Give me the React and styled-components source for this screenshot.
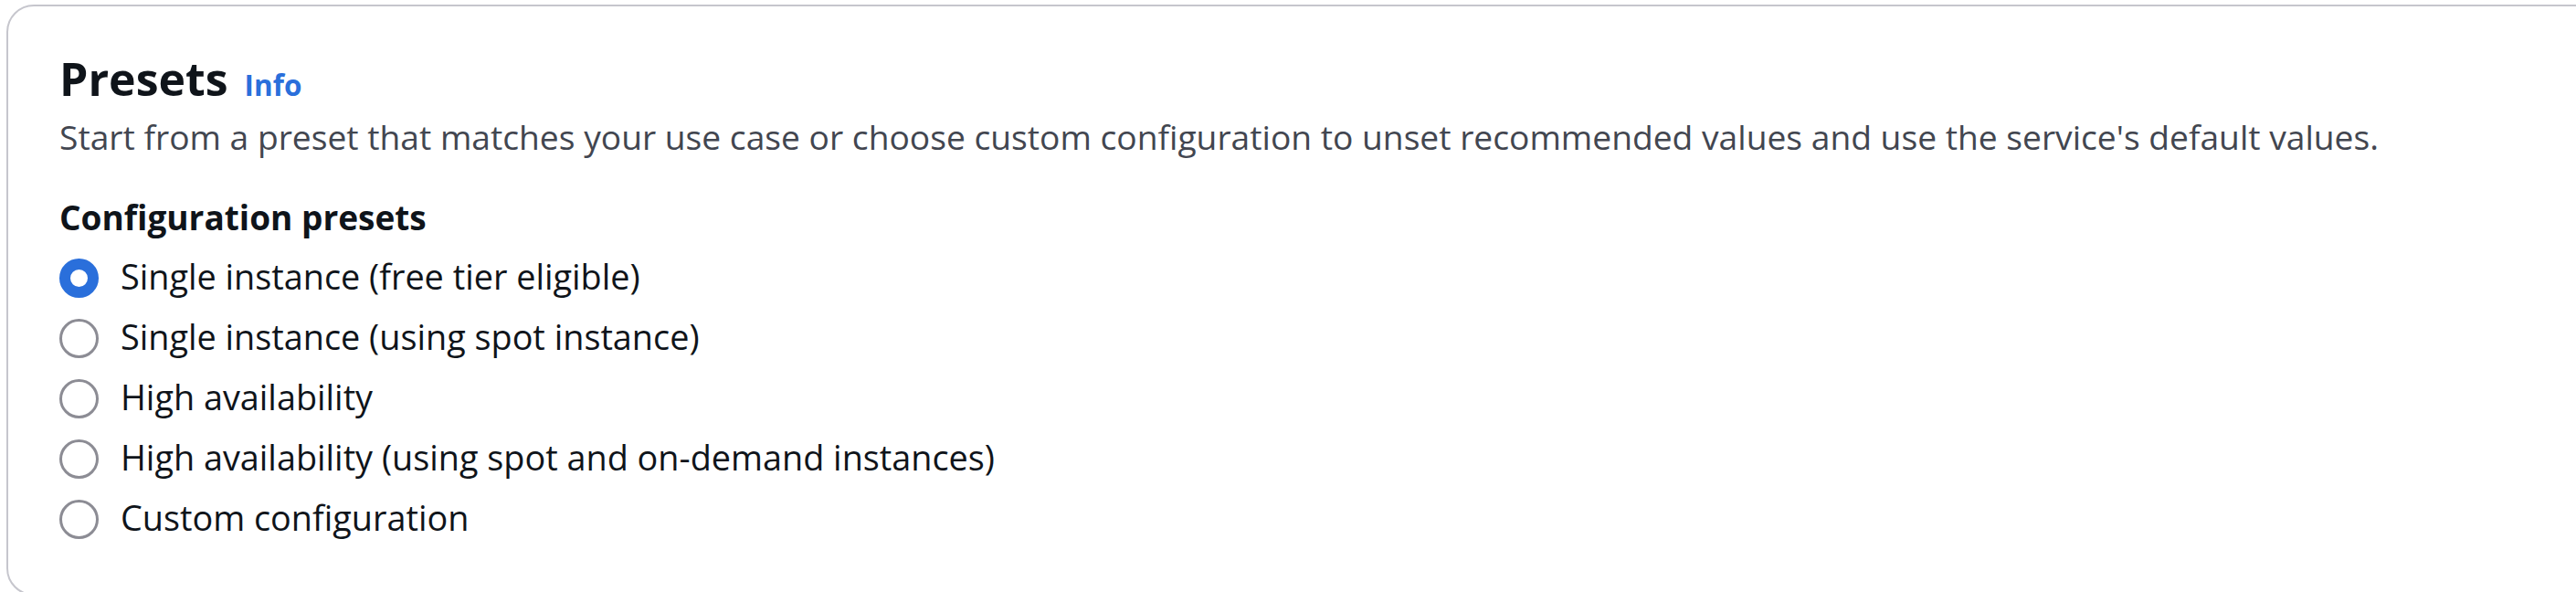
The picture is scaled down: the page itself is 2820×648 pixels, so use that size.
import React, { useState } from 'react';
import styled, { createGlobalStyle } from 'styled-components';

const GlobalStyle = createGlobalStyle`
  html, body {
    margin: 0;
    padding: 0;
    background: #ffffff;
    overflow: hidden;
  }
  body {
    font-family: "Open Sans", "Noto Sans", sans-serif;
  }
`;

const Page = styled.div`
  height: 100vh;
  overflow: hidden;
  padding: 5px 0 0 7px;
  box-sizing: border-box;
`;

const Card = styled.section`
  width: calc(100% + 60px);
  box-sizing: border-box;
  border: 2px solid #c6c6cd;
  border-radius: 30px;
  background: #ffffff;
  padding: 49px 56px 50px 56px;
`;

const Header = styled.div`
  display: flex;
  align-items: baseline;
  gap: 18px;
`;

const Title = styled.h2`
  margin: 0;
  font-size: 50px;
  line-height: 60px;
  font-weight: 700;
  color: #0f141a;
`;

const InfoLink = styled.a`
  font-size: 31.5px;
  font-weight: 700;
  color: #2a6fdb;
  text-decoration: none;
  cursor: pointer;
`;

const Description = styled.p`
  margin: 8px 0 0 0;
  font-size: 37.2px;
  line-height: 52px;
  color: #424650;
`;

const Fieldset = styled.fieldset`
  margin: 37px 0 0 0;
  padding: 0;
  border: none;
`;

const Legend = styled.legend`
  padding: 0;
  font-size: 37px;
  line-height: 50px;
  font-weight: 700;
  color: #0f141a;
`;

const Options = styled.div`
  display: flex;
  flex-direction: column;
  margin-top: 7px;
`;

const Option = styled.label`
  display: flex;
  align-items: center;
  gap: 24px;
  height: 66px;
  cursor: pointer;
`;

const Circle = styled.span`
  flex: none;
  box-sizing: border-box;
  width: 43px;
  height: 43px;
  margin-top: 2px;
  border-radius: 50%;
  border: ${props => (props.checked ? '12px solid #2a6fdb' : '3px solid #8c8c94')};
  background: #ffffff;
`;

const HiddenInput = styled.input`
  position: absolute;
  opacity: 0;
  width: 0;
  height: 0;
`;

const OptionText = styled.span`
  font-size: 37.8px;
  line-height: 66px;
  color: #0f141a;
`;

const presets = [
  'Single instance (free tier eligible)',
  'Single instance (using spot instance)',
  'High availability',
  'High availability (using spot and on-demand instances)',
  'Custom configuration',
];

export default function App() {
  const [selected, setSelected] = useState(0);

  return (
    <Page>
      <GlobalStyle />
      <Card>
        <Header>
          <Title>Presets</Title>
          <InfoLink>Info</InfoLink>
        </Header>
        <Description>
          Start from a preset that matches your use case or choose custom configuration to unset recommended values and use the service's default values.
        </Description>
        <Fieldset>
          <Legend>Configuration presets</Legend>
          <Options>
            {presets.map((label, i) => (
              <Option key={label}>
                <HiddenInput
                  type="radio"
                  name="preset"
                  checked={selected === i}
                  onChange={() => setSelected(i)}
                />
                <Circle checked={selected === i} />
                <OptionText>{label}</OptionText>
              </Option>
            ))}
          </Options>
        </Fieldset>
      </Card>
    </Page>
  );
}
